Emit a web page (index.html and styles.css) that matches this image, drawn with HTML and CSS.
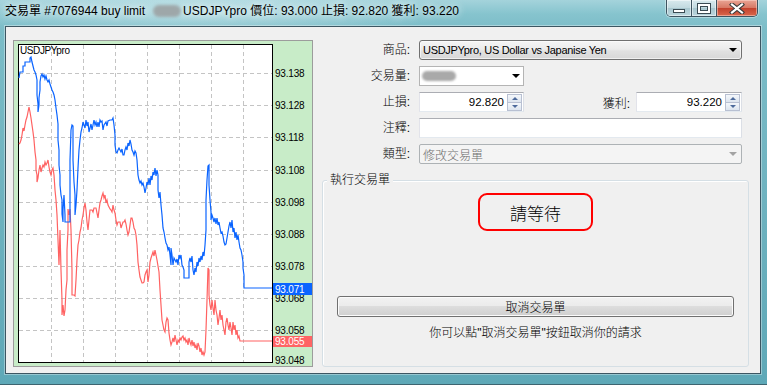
FILE: index.html
```html
<!DOCTYPE html>
<html>
<head>
<meta charset="utf-8">
<title>交易單</title>
<link rel="stylesheet" href="styles.css">
</head>
<body>
<div class="window">
  <div class="titlebar">
    <div class="title">交易單 #7076944 buy limit<span class="tblur"></span>USDJPYpro 價位: 93.000 止損: 92.820 獲利: 93.220</div>
    <div class="controls">
      <div class="cbtn min"><span class="min-ico"></span></div>
      <div class="cbtn max"><span class="max-ico"></span></div>
      <div class="cbtn close">
        <svg width="16" height="11" viewBox="0 0 16 11"><path d="M3 1.5L13 9.5M13 1.5L3 9.5" stroke="#3a3a3a" stroke-width="4.2" stroke-linecap="square"/><path d="M3 1.5L13 9.5M13 1.5L3 9.5" stroke="#fff" stroke-width="2.2" stroke-linecap="square"/></svg>
      </div>
    </div>
  </div>
  <div class="client">
    <div class="chart">
      <svg width="298" height="325" viewBox="14 41 298 325">
        <rect x="18.5" y="44.5" width="254" height="318" fill="#fff" stroke="#000"/>
        <g stroke="#c4c4c4" stroke-dasharray="4 3" fill="none">
          <path d="M19 73.5H272M19 105.5H272M19 137.5H272M19 170.5H272M19 202.5H272M19 234.5H272M19 266.5H272M19 298.5H272M19 330.5H272"/>
          <path d="M51.5 45V362M83.5 45V362M115.5 45V362M147.5 45V362M179.5 45V362M211.5 45V362M243.5 45V362"/>
        </g>
        <text class="sym" x="20" y="54">USDJPYpro</text>
        <g class="axis">
          <text x="275" y="77">93.138</text>
          <text x="275" y="109">93.128</text>
          <text x="275" y="141">93.118</text>
          <text x="275" y="174">93.108</text>
          <text x="275" y="206">93.098</text>
          <text x="275" y="238">93.088</text>
          <text x="275" y="270">93.078</text>
          <text x="275" y="302">93.068</text>
          <text x="275" y="334">93.058</text>
          <text x="275" y="364">93.048</text>
        </g>
        <polyline fill="none" stroke="#ff6262" stroke-width="1.2" points="19,144 20,143 21,140 22,135 23,128 24,131 25,125 26,120 27,117 28,112 29,107 30,112 31,118 32,125 33,132 34,140 35,152 36,160 36,170 37,175 37,182 38,178 39,170 40,165 41,172 42,168 43,165 44,167 45,162 46,165 47,163 48,160 49,167 50,172 51,175 52,170 53,168 54,175 55,190 56,200 57,215 58,240 59,265 60,230 61,270 62,300 62,315 63,305 64,316 65,310 66,290 67,280 67,250 68,230 68,209 69,215 70,209 71,230 72,270 72,295 74,295 75,296 76,280 77,260 78,245 79,240 80,232 81,228 82,220 83,215 84,208 85,203 86,210 87,222 88,230 89,220 90,210 92,210 93,212 94,208 96,208 97,213 98,218 99,210 100,203 101,200 102,196 103,193 104,198 105,195 106,203 107,200 108,205 110,209 111,210 112,212 113,205 114,210 115,213 116,220 117,225 118,222 120,222 121,228 122,225 123,222 124,222 125,220 126,224 127,230 128,235 129,232 130,225 131,218 132,218 133,222 134,228 135,230 136,235 137,245 138,262 139,270 140,277 141,280 142,283 143,283 144,282 145,275 146,272 147,270 148,282 149,275 150,262 151,258 152,255 153,252 154,256 155,250 156,255 157,260 158,266 159,272 160,290 161,305 162,320 163,325 164,330 165,332 166,322 167,318 168,320 169,333 170,340 171,345 172,342 173,338 174,342 175,335 176,340 177,345 178,340 179,342 180,338 181,340 182,337 183,336 184,340 185,338 186,342 187,340 188,345 189,338 190,342 191,345 192,340 193,346 194,342 195,348 196,345 197,350 198,343 199,346 200,352 201,348 202,355 203,352 204,355 205,352 206,330 207,300 208,268 209,270 209,295 210,305 211,310 212,300 213,308 214,315 215,300 216,310 217,315 218,325 219,318 220,310 221,320 222,315 223,325 224,330 225,335 226,322 227,318 228,325 229,330 230,322 231,328 232,335 233,322 234,330 235,325 236,335 237,330 238,338 239,336 240,341 272,341"/>
        <polyline fill="none" stroke="#0a64ff" stroke-width="1.2" points="19,78 20,72 23,72 23,66 25,66 25,62 30,62 30,58 31,57 32,62 33,66 34,70 35,72 36,75 37,80 37,95 38,104 38,112 39,105 39,98 40,90 40,82 41,76 42,74 43,77 44,75 45,79 46,76 47,80 48,82 49,80 50,84 51,87 52,90 53,92 54,95 55,100 56,108 57,115 58,124 58,140 59,150 59,165 60,175 60,185 61,195 62,200 62,214 63,222 63,210 64,195 65,215 65,222 70,222 70,200 70,160 71,130 72,125 73,126 73,160 74,182 75,195 75,215 76,205 77,190 78,168 79,150 80,140 81,132 82,128 83,122 84,125 85,128 86,120 87,126 88,122 89,132 90,128 91,124 92,130 93,125 94,120 95,125 96,122 97,127 98,122 99,127 100,120 101,122 102,121 103,130 104,125 106,122 107,126 108,121 110,120 112,120 113,118 114,125 115,135 115,145 116,152 117,153 118,150 119,148 121,152 122,149 123,155 124,155 125,150 126,147 127,150 128,143 129,146 130,140 131,144 132,150 133,152 134,155 135,151 136,153 137,160 138,175 139,180 140,183 141,181 142,185 143,183 144,187 145,193 146,188 147,182 148,185 149,178 150,185 151,176 152,180 153,172 154,175 155,168 156,176 157,170 158,175 158,190 159,198 160,192 161,205 162,215 163,228 164,232 165,238 166,243 167,245 168,250 169,247 170,255 171,265 171,248 172,255 173,265 174,258 176,262 177,259 178,265 179,255 180,258 181,255 182,265 183,267 184,270 184,278 189,278 189,262 190,258 191,262 192,256 193,270 194,275 195,268 196,272 197,262 198,266 199,258 200,262 201,256 202,260 203,252 204,256 205,245 206,230 206,200 207,180 208,166 209,165 209,185 210,200 211,212 211,220 212,215 213,218 214,222 215,218 216,224 217,218 218,225 219,222 220,228 221,233 222,232 223,236 224,242 225,245 226,244 227,238 228,232 229,226 230,222 231,228 232,220 233,232 234,228 235,238 236,232 237,240 238,235 239,242 240,248 241,250 242,255 243,262 243,268 244,275 244,288 272,288"/>
        <rect x="273" y="283" width="39" height="12" fill="#0a64ff"/>
        <text class="tag" x="275" y="292.5">93.071</text>
        <rect x="273" y="336" width="39" height="11" fill="#ff6464"/>
        <text class="tag" x="275" y="345">93.055</text>
      </svg>
    </div>
    <div class="panel">
      <div class="form">
        <div class="lbl">商品:</div>
        <div class="combo"><span class="ctext">USDJPYpro, US Dollar vs Japanise Yen</span><span class="arrow"></span></div>

        <div class="lbl">交易量:</div>
        <div class="fieldrow"><div class="vol"><span class="vblur"></span><span class="arrow"></span></div></div>

        <div class="lbl">止損:</div>
        <div class="fieldrow">
          <div class="num"><span class="v">92.820</span><span class="spin"><i><b class="up"></b></i><i><b class="down"></b></i></span></div>
          <div class="tpl">獲利:</div>
          <div class="num wide"><span class="v">93.220</span><span class="spin"><i><b class="up"></b></i><i><b class="down"></b></i></span></div>
        </div>

        <div class="lbl">注釋:</div>
        <div class="text"></div>

        <div class="lbl">類型:</div>
        <div class="dis"><span class="dtext">修改交易單</span><span class="arrow grey"></span></div>
      </div>
      <div class="group">
        <span class="legend">執行交易單</span>
        <div class="wait">請等待</div>
        <div class="btn">取消交易單</div>
        <div class="hint">你可以點"取消交易單"按鈕取消你的請求</div>
      </div>
    </div>
  </div>
</div>
</body>
</html>
```
FILE: styles.css
```css
* { box-sizing: border-box; }
html, body { margin: 0; padding: 0; }
body {
  width: 767px;
  height: 385px;
  overflow: hidden;
  font-family: "Liberation Sans", "Noto Sans CJK TC", sans-serif;
  font-size: 12px;
  font-weight: 300;
  color: #000;
}
.window {
  width: 767px;
  height: 385px;
  display: flex;
  flex-direction: column;
  background:
    radial-gradient(ellipse 260px 22px at 200px 12px, rgba(235,248,250,0.55), rgba(235,248,250,0) 100%),
    linear-gradient(180deg, #a4d3db 0, #86c4ce 14px, #7bbcc7 30px, #6eb2bf 200px, #5ea8b7 385px);
  border-bottom: 1px solid #3d6470;
}
.titlebar {
  height: 26px;
  display: flex;
  align-items: flex-start;
  flex: none;
}
.title {
  padding-left: 5px;
  line-height: 23px;
  font-size: 12px;
  font-weight: 400;
  white-space: nowrap;
  text-shadow: 0 0 6px rgba(240,250,252,0.9), 0 0 10px rgba(240,250,252,0.7);
}
.tblur {
  display: inline-block;
  width: 28px;
  height: 12px;
  margin: 0 2px 0 8px;
  vertical-align: -2px;
  background: #9ea7a9;
  border-radius: 6px;
  filter: blur(1.5px);
}
.controls {
  margin-left: auto;
  margin-right: 9px;
  display: flex;
  height: 17px;
  border: 1px solid #3e5460;
  border-top: 0;
  border-radius: 0 0 5px 5px;
  overflow: hidden;
  box-shadow: 0 0 0 1px rgba(255,255,255,0.35);
}
.cbtn {
  height: 16px;
  display: flex;
  align-items: center;
  justify-content: center;
}
.min, .max {
  width: 25px;
  border-right: 1px solid #3e5460;
  background: linear-gradient(180deg, #d9eaee 0, #c1d9df 50%, #a7c6ce 50%, #bcd6dd 100%);
  box-shadow: inset 0 0 0 1px rgba(255,255,255,0.5);
}
.close {
  width: 40px;
  background: linear-gradient(180deg, #e9a595 0, #d77763 50%, #c2412d 50%, #d9684c 100%);
  box-shadow: inset 0 0 0 1px rgba(255,220,210,0.5);
}
.min-ico {
  width: 12px;
  height: 4px;
  margin-top: 6px;
  background: #fff;
  border: 1px solid #3a4a52;
}
.max-ico {
  width: 12px;
  height: 9px;
  border: 2px solid #fff;
  outline: 1px solid #3a4a52;
  box-shadow: inset 0 0 0 1px #3a4a52;
}
.client {
  margin: 0 6px 0 5px;
  height: 348px;
  border: 1px solid #3c5662;
  background: #f0f0f0;
  display: flex;
  padding: 13px 0 0 7px;
  box-shadow: 0 0 0 1px rgba(255,255,255,0.35);
  flex: none;
}
.chart {
  width: 300px;
  height: 327px;
  border: 1px solid #9c9c9c;
  background: #c8ecc8;
  flex: none;
}
.chart svg { display: block; }
.sym {
  font-family: "Liberation Sans", sans-serif;
  font-size: 10px;
  letter-spacing: -0.4px;
  fill: #000;
}
.axis text {
  font-family: "Liberation Sans", sans-serif;
  font-size: 10px;
  letter-spacing: -0.2px;
  fill: #000;
}
.tag {
  font-family: "Liberation Sans", sans-serif;
  font-size: 10px;
  letter-spacing: -0.2px;
  fill: #fff;
}
.panel {
  flex: 1;
  padding-left: 9px;
  display: flex;
  flex-direction: column;
}
.form {
  display: grid;
  grid-template-columns: 88px 323px;
  grid-auto-rows: 20px;
  column-gap: 9px;
  row-gap: 6px;
}
.lbl {
  text-align: right;
  line-height: 20px;
  font-size: 12px;
}
.fieldrow {
  display: flex;
  align-items: center;
}
.combo {
  height: 20px;
  border: 1px solid #707070;
  border-radius: 3px;
  background: linear-gradient(180deg, #f5f5f5 0, #ececec 45%, #e1e1e1 55%, #d7d7d7 100%);
  box-shadow: inset 0 0 0 1px rgba(255,255,255,0.6);
  display: flex;
  align-items: center;
  padding: 0 4px 0 3px;
}
.ctext {
  flex: 1;
  font-size: 11px;
  letter-spacing: -0.3px;
  white-space: nowrap;
}
.arrow {
  width: 0;
  height: 0;
  border-left: 4px solid transparent;
  border-right: 4px solid transparent;
  border-top: 4px solid #000;
  flex: none;
}
.arrow.grey { border-top-color: #a3a3a3; }
.vol {
  width: 105px;
  height: 20px;
  border: 1px solid #b4b4b4;
  background: #fff;
  display: flex;
  align-items: center;
  padding: 0 3px 0 2px;
}
.vblur {
  width: 34px;
  height: 10px;
  margin-right: auto;
  background: #a9a9a9;
  border-radius: 5px;
  filter: blur(1.2px);
}
.num {
  width: 105px;
  height: 20px;
  border: 1px solid;
  border-color: #abadb3 #dbdfe6 #e3e9ef #e2e3ea;
  background: #fff;
  display: flex;
  align-items: center;
  padding: 0 1px 0 2px;
}
.num.wide { width: 106px; }
.num .v {
  flex: 1;
  text-align: right;
  font-size: 11.5px;
  padding-right: 3px;
}
.spin {
  width: 15px;
  height: 17px;
  display: flex;
  flex-direction: column;
}
.spin i {
  flex: 1;
  border: 1px solid #b8c0d2;
  background: linear-gradient(180deg, #f4f7fb, #dde5ef);
  display: flex;
  align-items: center;
  justify-content: center;
}
.spin i + i { border-top: 0; }
.spin b {
  width: 0;
  height: 0;
  border-left: 3px solid transparent;
  border-right: 3px solid transparent;
}
.spin b.up { border-bottom: 3px solid #4d6a9c; }
.spin b.down { border-top: 3px solid #4d6a9c; }
.tpl {
  margin-left: auto;
  margin-right: 6px;
  font-size: 12px;
}
.text {
  height: 20px;
  border: 1px solid;
  border-color: #abadb3 #dbdfe6 #e3e9ef #e2e3ea;
  background: #fff;
}
.dis {
  height: 20px;
  border: 1px solid #adb2b5;
  border-radius: 2px;
  background: #f4f4f4;
  color: #6d6d6d;
  display: flex;
  align-items: center;
  padding: 0 4px 0 3px;
}
.dtext {
  flex: 1;
  font-size: 12px;
}
.group {
  position: relative;
  margin: 16px 11px 0 0;
  height: 187px;
  border: 1px solid #d5dfe5;
  border-radius: 3px;
  box-shadow: inset 1px 1px 0 #fff;
  display: flex;
  flex-direction: column;
  align-items: center;
}
.legend {
  position: absolute;
  top: -8px;
  left: 4px;
  padding: 0 3px;
  background: #f0f0f0;
  font-size: 12px;
  line-height: 15px;
}
.wait {
  margin-top: 12px;
  width: 115px;
  height: 38px;
  border: 2px solid #ff0000;
  border-radius: 9px;
  font-size: 17px;
  display: flex;
  align-items: center;
  justify-content: center;
}
.btn {
  align-self: stretch;
  margin: 65px 14px 0;
  height: 21px;
  border: 1px solid #707070;
  border-radius: 3px;
  background: linear-gradient(180deg, #f2f2f2 0, #ebebeb 50%, #dddddd 50%, #cfcfcf 100%);
  box-shadow: inset 0 0 0 1px #fbfbfb;
  font-size: 12px;
  display: flex;
  align-items: center;
  justify-content: center;
}
.hint {
  margin-top: 8px;
  font-size: 12px;
  line-height: 16px;
}
```
